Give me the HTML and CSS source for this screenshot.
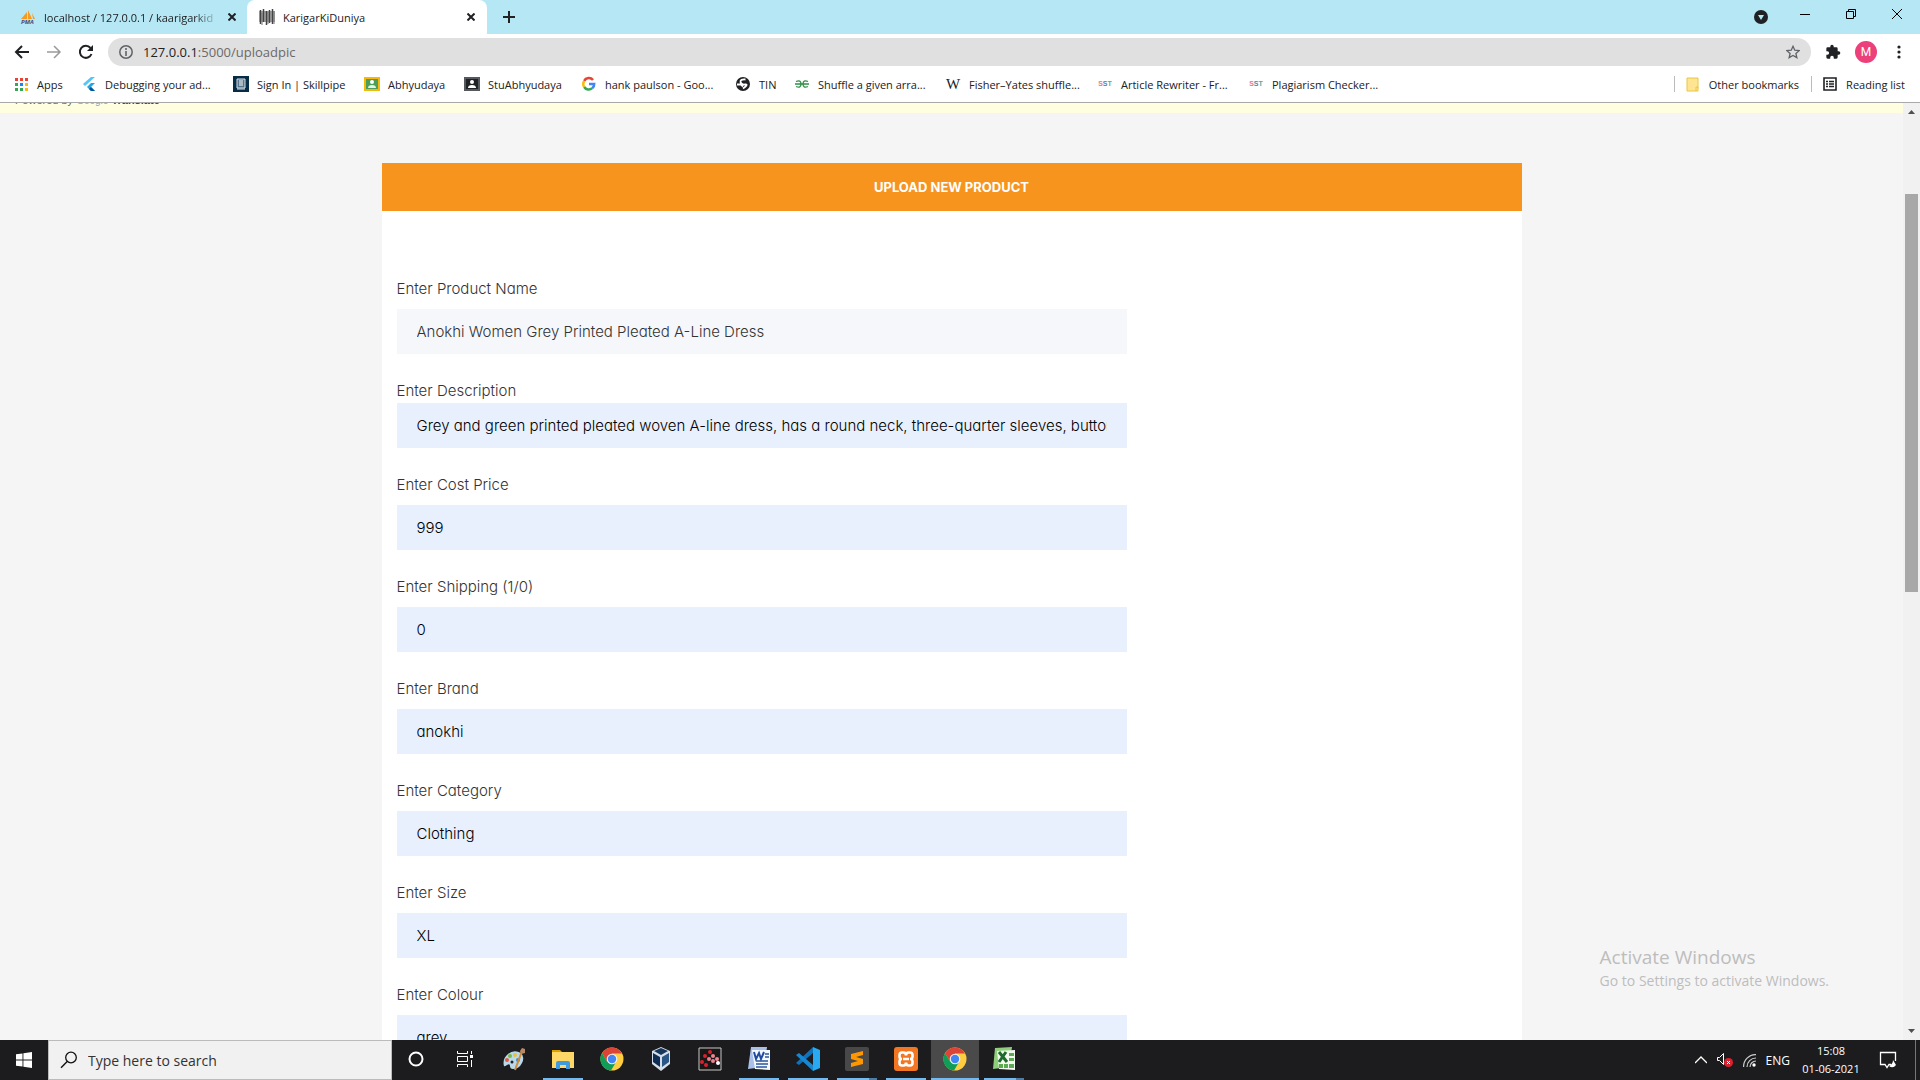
FILE: index.html
```html
<!DOCTYPE html>
<html lang="en">
<head>
<meta charset="utf-8">
<title>KarigarKiDuniya</title>
<link rel="stylesheet" href="styles.css">
</head>
<body>
<div class="screen">
  <header class="browser">
    <div class="tabstrip">
      <div class="tab">
        <svg class="ico" viewBox="0 0 16 16"><path d="M1 10 7 3v7zM8 10V1l4 9zM12 4l3 6h-2z" fill="#f89a1c"/><text x="1" y="15" font-size="6" font-weight="700" font-style="italic" fill="#4a4a78">PMA</text></svg>
        <span class="tab-title faded">localhost / 127.0.0.1 / kaarigarkid</span>
        <button class="plain" aria-label="Close tab"><svg class="cross" viewBox="0 0 8 8"><path d="M.5 .5l7 7M7.500 .5l-7 7" /></svg></button>
      </div>
      <div class="tab active">
        <svg class="ico" viewBox="0 0 16 16"><path d="M0 2h16v11H0z" fill="#aaa"/><path d="M1.500 1v14M4.500 0v13M7.500 2v14M10.500 1v13M13.500 0v15" stroke="#444" stroke-width="1.500"/><path d="M3 4v12M9 3v12M15 2v13" stroke="#777"/></svg>
        <span class="tab-title">KarigarKiDuniya</span>
        <button class="plain" aria-label="Close tab"><svg class="cross" viewBox="0 0 8 8"><path d="M.5 .5l7 7M7.500 .5l-7 7" /></svg></button>
      </div>
      <button class="plain newtab" aria-label="New tab"><svg width="12" height="12" viewBox="0 0 12 12"><path d="M6 0v12M0 6h12" stroke="#222" stroke-width="2"/></svg></button>
      <div class="window-buttons">
        <button class="plain tab-search" aria-label="Search tabs"><svg width="14" height="14" viewBox="0 0 14 14"><circle cx="7" cy="7" r="7" fill="#202124"/><path d="M4 5h6L7 10z" fill="#b5e8f4"/></svg></button>
        <button class="plain" aria-label="Minimize"><svg width="10" height="10" viewBox="0 0 10 10"><path d="M0 5.500h10" stroke="#000"/></svg></button>
        <button class="plain" aria-label="Restore"><svg width="10" height="10" viewBox="0 0 10 10"><path d="M.5 2.500h7v7h-7zM2.500 2.500v-2h7v7h-2" fill="none" stroke="#000"/></svg></button>
        <button class="plain" aria-label="Close"><svg width="10" height="10" viewBox="0 0 10 10"><path d="M0 0l10 10M10 0 0 10" stroke="#000"/></svg></button>
      </div>
    </div>
    <div class="toolbar">
      <div class="history">
        <button class="plain" aria-label="Back"><svg width="16" height="16" viewBox="0 0 16 16"><path d="M15 8H2M8 2 2 8l6 6" fill="none" stroke="#202124" stroke-width="2"/></svg></button>
        <button class="plain" aria-label="Forward"><svg width="16" height="16" viewBox="0 0 16 16"><path d="M1 8h13M8 2l6 6-6 6" fill="none" stroke="#9a9a9a" stroke-width="1.500"/></svg></button>
        <button class="plain" aria-label="Reload"><svg width="16" height="16" viewBox="0 0 16 16"><path d="M13.500 10A6 6 0 1 1 12.500 4" fill="none" stroke="#202124" stroke-width="2"/><path d="M15 1v6H9z" fill="#202124"/></svg></button>
      </div>
      <div class="address">
        <svg width="14" height="14" viewBox="0 0 14 14"><circle cx="7" cy="7" r="6.200" fill="none" stroke="#5f6368" stroke-width="1.500"/><path d="M7 6v5M7 3v2" stroke="#5f6368" stroke-width="1.600"/></svg>
        <span class="url">127.0.0.1<span class="path">:5000/uploadpic</span></span>
        <button class="plain" aria-label="Bookmark"><svg width="14" height="14" viewBox="0 0 16 16"><path d="M8 1.500l2 4.500 5 .5-3.700 3.200 1.100 4.800L8 12l-4.400 2.500 1.100-4.800L1 6.500 6 6z" fill="none" stroke="#5f6368" stroke-width="1.500"/></svg></button>
      </div>
      <button class="plain" aria-label="Extensions"><svg width="16" height="16" viewBox="0 0 24 24"><path d="M20.500 11H19V7a2 2 0 0 0-2-2h-4V3.500a2.500 2.500 0 0 0-5 0V5H4a2 2 0 0 0-2 2v3.800h1.500a2.700 2.700 0 0 1 0 5.400H2V20a2 2 0 0 0 2 2h3.800v-1.500a2.700 2.700 0 0 1 5.400 0V22H17a2 2 0 0 0 2-2v-4h1.500a2.500 2.500 0 0 0 0-5z" fill="#202124"/></svg></button>
      <button class="avatar">M</button>
      <button class="plain menu" aria-label="Menu"><svg width="4" height="14" viewBox="0 0 4 14"><g fill="#202124"><circle cx="2" cy="2" r="1.600"/><circle cx="2" cy="7" r="1.600"/><circle cx="2" cy="12" r="1.600"/></g></svg></button>
    </div>
    <nav class="bookmarks">
      <div class="marks">
        <a href="#"><svg class="ico" viewBox="0 0 16 16"><g fill="#ea4335"><path d="M2 2h3v3H2zM7 2h3v3H7zM12 2h3v3h-3z"/></g><path d="M2 7h3v3H2zM2 12h3v3H2z" fill="#34a853"/><path d="M7 7h3v3H7z" fill="#1a86f0"/><path d="M7 12h3v3H7z" fill="#34a853"/><path d="M12 7h3v3h-3zM12 12h3v3h-3z" fill="#fbbc05"/></svg>Apps</a>
        <a href="#"><svg class="ico" viewBox="0 0 16 16"><path d="M2 8 10 1h4L4 10z" fill="#54c5f8"/><path d="M6 11l4-4h4l-4 4 4 4h-4z" fill="#29a3e0"/><path d="M8 13l2-2 4 4h-4z" fill="#01579b"/></svg>Debugging your ad...</a>
        <a href="#"><svg class="ico" viewBox="0 0 16 16"><path d="M0 0h16v16H0z" fill="#072c46"/><path d="M4 3h8v9H4zM4 13h8" fill="#58748a" stroke="#d6e0e8"/><path d="M6 5h4M6 7h4M6 9h4" stroke="#fff"/></svg>Sign In | Skillpipe</a>
        <a href="#"><svg class="ico" viewBox="0 0 16 16"><path d="M0 1h16v14H0z" fill="#f6b90b"/><path d="M2 3h12v10H2z" fill="#4b9e5a"/><circle cx="8" cy="6" r="2" fill="#fff"/><path d="M4 12q0-3 4-3t4 3z" fill="#e5f2e7"/></svg>Abhyudaya</a>
        <a href="#"><svg class="ico" viewBox="0 0 16 16"><path d="M0 1h16v14H0z" fill="#55585c"/><path d="M2 3h12v10H2z" fill="#202124"/><circle cx="8" cy="6" r="2" fill="#fff"/><path d="M4 12q0-3 4-3t4 3z" fill="#fff"/></svg>StuAbhyudaya</a>
        <a href="#"><svg class="ico" viewBox="0 0 16 16"><g fill="none" stroke-width="2.500"><path d="M3.200 5A5.200 5.200 0 0 1 12 4" stroke="#ea4335"/><path d="M3.200 5a5.500 5.500 0 0 0 0 6" stroke="#fbbc05"/><path d="M3.200 11a5.200 5.200 0 0 0 8 1.200" stroke="#34a853"/><path d="M8 8h5.200a5 5 0 0 1-2 4.200" stroke="#4285f4"/></g></svg>hank paulson - Goo...</a>
        <a href="#"><svg class="ico" viewBox="0 0 16 16"><circle cx="8" cy="8" r="7" fill="#202124"/><path d="M10.500 3.500Q5 3 5.500 6T10 8.500 8 12.500M2 8.500h4l2 2" fill="none" stroke="#fff" stroke-width="1.800"/></svg>TIN</a>
        <a href="#"><svg class="ico" viewBox="0 0 16 16"><path d="M1 8h14M2 5.500q5-2 5 2.500t-5 2.500M14 5.500q-5-2-5 2.500t5 2.500" fill="none" stroke="#2f8d46" stroke-width="1.300"/></svg>Shuffle a given arra...</a>
        <a href="#"><span class="ico wiki">W</span>Fisher–Yates shuffle...</a>
        <a href="#"><span class="ico sst"><i>S</i><b>S</b><em>T</em></span>Article Rewriter - Fr...</a>
        <a href="#"><span class="ico sst"><i>S</i><b>S</b><em>T</em></span>Plagiarism Checker...</a>
      </div>
      <div class="side-marks">
        <a href="#"><svg class="ico" viewBox="0 0 16 16"><path d="M2 2h11v10l-2 3H2z" fill="#ffe591" stroke="#e9c645"/><path d="M11 15v-4h2v4z" fill="#ffe591" stroke="#e9c645"/></svg>Other bookmarks</a>
        <a href="#"><svg class="ico" viewBox="0 0 16 16"><path d="M2 2h12v12H2z" fill="none" stroke="#202124" stroke-width="1.600"/><path d="M4 5.500h2M7 5.500h5M4 8h2M7 8h5M4 10.500h2M7 10.500h5" stroke="#202124" stroke-width="1.300"/></svg>Reading list</a>
      </div>
    </nav>
  </header>

  <main class="viewport">
    <div class="page">
      <div class="translate"><div>Powered by <span class="g">Google</span> <b>Translate</b></div></div>
      <form class="card">
        <h1>UPLOAD NEW PRODUCT</h1>
        <div class="fields">
          <div class="field"><label for="name">Enter Product Name</label><input id="name" class="typed" value="Anokhi Women Grey Printed Pleated A-Line Dress"></div>
          <div class="field tight"><label for="desc">Enter Description</label><input id="desc" value="Grey and green printed pleated woven A-line dress, has a round neck, three-quarter sleeves, button closure"></div>
          <div class="field"><label for="cost">Enter Cost Price</label><input id="cost" value="999"></div>
          <div class="field"><label for="ship">Enter Shipping (1/0)</label><input id="ship" value="0"></div>
          <div class="field"><label for="brand">Enter Brand</label><input id="brand" value="anokhi"></div>
          <div class="field"><label for="cat">Enter Category</label><input id="cat" value="Clothing"></div>
          <div class="field"><label for="size">Enter Size</label><input id="size" value="XL"></div>
          <div class="field"><label for="colour">Enter Colour</label><input id="colour" value="grey"></div>
        </div>
      </form>
    </div>
    <div class="scrollbar">
      <svg width="7" height="4" viewBox="0 0 7 4"><path d="M0 4 3.500 0 7 4z" fill="#505050"/></svg>
      <div class="track"><div class="thumb"></div></div>
      <svg width="7" height="4" viewBox="0 0 7 4"><path d="M0 0h7L3.500 4z" fill="#505050"/></svg>
    </div>
    <div class="watermark"><p class="big">Activate Windows</p><p>Go to Settings to activate Windows.</p></div>
  </main>

  <footer class="taskbar">
    <button class="plain start" aria-label="Start"><svg width="16" height="16" viewBox="0 0 16 16"><path d="M0 2.300 6.500 1.400V7.600H0zM7.400 1.200 16 0v7.600H7.400zM0 8.400h6.500v6.200L0 13.700zM7.400 8.400H16V16l-8.600-1.200z" fill="#fff"/></svg></button>
    <div class="search">
      <svg width="18" height="18" viewBox="0 0 18 18"><circle cx="11" cy="6.500" r="5.300" fill="none" stroke="#111" stroke-width="1.300"/><path d="M7.200 10.400 1 16.800" stroke="#111" stroke-width="1.400"/></svg>
      <input type="text" aria-label="Search" placeholder="Type here to search">
    </div>
    <div class="apps">
      <button class="plain" aria-label="Cortana"><svg width="16" height="16" viewBox="0 0 16 16"><circle cx="8" cy="8" r="6.500" fill="none" stroke="#fff" stroke-width="2"/></svg></button>
      <button class="plain" aria-label="Task view"><svg width="16" height="16" viewBox="0 0 16 16"><path d="M.5 0v2.500h10V0M.5 5.500h10v5H.5zM.5 16v-2.500h10V16M14.500 0v3M14.500 9v7" fill="none" stroke="#fff"/><path d="M13 4h3v3h-3z" fill="#fff"/></svg></button>
      <button class="plain" aria-label="Paint"><svg width="24" height="24" viewBox="0 0 24 24"><path d="M2 19Q0 12 6 7t13-1q4 4 1 10t-9 6q-3 0-3-3t-3-1-3 1z" fill="#b9d9ea"/><circle cx="5" cy="13" r="2" fill="#e05a44"/><circle cx="8" cy="9" r="2" fill="#74b84a"/><circle cx="13" cy="8" r="2" fill="#e8c13b"/><circle cx="16" cy="13" r="2" fill="#4488c8"/><circle cx="10" cy="15" r="1.500" fill="#222"/><path d="M13 23 20 4" stroke="#cf8a3c" stroke-width="2"/><path d="M18 4l2-3 3 1v4l-4 1z" fill="#b98a66"/></svg></button>
      <button class="plain open" aria-label="File Explorer"><svg width="24" height="24" viewBox="0 0 24 24"><path d="M1 3h8l2 2H1z" fill="#d9a000"/><path d="M1 5h22v16H1z" fill="#ffd766"/><path d="M5 22v-6q0-2 2-2h10q2 0 2 2v6h-4v-4H9v4z" fill="#3f9be0"/></svg></button>
      <button class="plain" aria-label="Chrome"><svg width="24" height="24" viewBox="0 0 24 24"><use href="#chrome"/></svg></button>
      <button class="plain" aria-label="VirtualBox"><svg width="24" height="24" viewBox="0 0 24 24"><path d="M12 0l9 4v13l-9 7-9-7V4z" fill="#d6dfe9"/><path d="M12 1l7 3-7 4-7-4z" fill="#17365c"/><path d="M4 6l7 4v10l-7-5z" fill="#0f2d54"/><path d="M20 6l-7 4v10l7-5z" fill="#2a5587"/></svg></button>
      <button class="plain" aria-label="Scatter"><svg width="24" height="24" viewBox="0 0 24 24"><path d="M1 1h22v22H1z" fill="#171717" stroke="#c8c8c8"/><g fill="#d8202c"><circle cx="12" cy="5" r="2"/><circle cx="7" cy="9" r="2"/><circle cx="4" cy="15" r="2"/><circle cx="8" cy="18" r="2"/></g><g fill="#ef8290"><circle cx="15" cy="9" r="2"/><circle cx="11" cy="12" r="2"/><circle cx="15" cy="14" r="2"/><circle cx="19" cy="12" r="2"/></g><circle cx="20" cy="16" r="2" fill="#fff"/></svg></button>
      <button class="plain open" aria-label="Word"><svg width="24" height="24" viewBox="0 0 24 24"><path d="M4 0h16l-3 20-16 2z" fill="#a9c1e8"/><path d="M5 3h18v20l-15-1z" fill="#f5f8fd"/><path d="M7 5l2 7 3-6 2 6 3-7" fill="none" stroke="#1f4ba0" stroke-width="2"/><path d="M18 7h4M18 10h4M9 14h12M9 17h12M9 20h11" stroke="#2b579a" stroke-width="1.500"/></svg></button>
      <button class="plain open" aria-label="VS Code"><svg width="24" height="24" viewBox="0 0 24 24"><path d="M17 0l7 3v18l-7 3z" fill="#29a9f2"/><path d="M17 0v6L3 18l-3-2z" fill="#0e72bd"/><path d="M17 24v-6L3 6 0 8z" fill="#1887d2"/></svg></button>
      <button class="plain open split" aria-label="Sublime Text"><svg width="24" height="24" viewBox="0 0 24 24"><rect width="24" height="24" rx="2" fill="#484848"/><path d="M18 4v4l-7 2 7 2v5L6 20v-4l7-2-7-2V7z" fill="#ff9800"/></svg></button>
      <button class="plain open" aria-label="XAMPP"><svg width="24" height="24" viewBox="0 0 24 24"><rect width="24" height="24" rx="3" fill="#f37622"/><path d="M8 5.500h1.500q2.500 0 2.500 3 0-3 2.500-3H16q2.500 0 2.500 2.500v1.500q0 2.500-2.500 2.500 2.500 0 2.500 2.500V16q0 2.500-2.500 2.500h-1.500q-2.500 0-2.500-3 0 3-2.500 3H8Q5.500 18.500 5.500 16v-1.500Q5.500 12 8 12q-2.500 0-2.500-2.500V8q0-2.500 2.500-2.500zM9 12h6" fill="none" stroke="#fff" stroke-width="2.600"/></svg></button>
      <button class="plain open current" aria-label="Chrome window"><svg width="24" height="24" viewBox="0 0 24 24"><g id="chrome"><circle cx="12" cy="12" r="11.500" fill="#ffcd40"/><path d="M12 12 7 14.500 2 6A11.500 11.500 0 0 1 22 6.500H12z" fill="#db4437"/><path d="M2 6A11.500 11.500 0 0 0 11 23.500L16 15l-4-3-5 2.500z" fill="#0f9d58"/><circle cx="12" cy="12" r="5.300" fill="#f1f1f1"/><circle cx="12" cy="12" r="4.200" fill="#4285f4"/></g></svg></button>
      <button class="plain open split" aria-label="Excel"><svg width="24" height="24" viewBox="0 0 24 24"><path d="M3 1 20 0l-3 20-16 2z" fill="#8fcf7b"/><path d="M5 4l18-1v20l-16-1z" fill="#f4faf1"/><path d="M7 5l8 10M14 5 7 15" stroke="#1e6b2c" stroke-width="3"/><path d="M17 6h5v3h-5zM17 11h5v3h-5zM7 17h4v4H7zM12 17h4v4h-4zM17 17h5v4h-5z" fill="#5dab50"/></svg></button>
    </div>
    <div class="tray">
      <svg width="12" height="8" viewBox="0 0 12 8"><path d="M0 7l6-6 6 6" fill="none" stroke="#fff" stroke-width="1.300"/></svg>
      <svg width="16" height="14" viewBox="0 0 16 14"><path d="M.5 4.500h2l4-4v11l-4-4h-2z" fill="none" stroke="#fff"/><circle cx="11.500" cy="9.500" r="4.500" fill="#e0202e"/><path d="M10 8l3 3M13 8l-3 3" stroke="#fff"/></svg>
      <svg width="13" height="13" viewBox="0 0 13 13"><g fill="none" stroke="#ccc" stroke-width="1.200"><path d="M.6 13A12 12 0 0 1 13 .6M4 13a9 9 0 0 1 9-9M7 13a6 6 0 0 1 6-6"/></g><circle cx="11" cy="11" r="1.700" fill="#fff"/></svg>
      <span class="lang">ENG</span>
      <div class="clock"><span>15:08</span><span>01-06-2021</span></div>
      <button class="plain" aria-label="Notifications"><svg width="18" height="18" viewBox="0 0 18 18"><path d="M12 13.500h-2l-2 3-2-3H1.500v-12h15V10" fill="none" stroke="#fff" stroke-width="1.300"/><path d="M14 9q0 4-4 6 4 3 7-1z" fill="#fff"/></svg></button>
    </div>
  </footer>
</div>
</body>
</html>
```
FILE: styles.css
```css
* { box-sizing: border-box; }
body { margin: 0; font-family: "Open Sans", "Noto Sans", sans-serif; font-size: 12px; color: #202124; }
svg { display: block; flex: none; }
a { color: inherit; text-decoration: none; }
.plain { display: flex; align-items: center; justify-content: center; padding: 0; border: 0; background: none; }
.ico { width: 16px; height: 16px; flex: none; }

.screen { height: 100vh; display: flex; flex-direction: column; overflow: hidden; }

.browser { flex: none; background: #fff; border-bottom: 1px solid #a9a9a9; }
.tabstrip { display: flex; height: 34px; background: #b5e8f4; }
.tab { display: flex; align-items: center; gap: 8px; width: 240px; padding: 0 12px; }
.tab:first-child { width: 247px; padding: 0 11px 0 20px; }
.tab.active { background: #fff; border-radius: 8px 8px 0 0; }
.tab-title { flex: 1; overflow: hidden; white-space: nowrap; font-size: 11px; }
.faded { mask-image: linear-gradient(90deg, #000 85%, transparent); }
.cross { width: 8px; height: 8px; fill: none; stroke: #202124; stroke-width: 2; }
.newtab { width: 44px; }
.window-buttons { display: flex; margin-left: auto; height: 28px; }
.window-buttons .plain { width: 46px; }
.window-buttons .tab-search { width: 42px; height: 34px; }

.toolbar { display: flex; align-items: center; gap: 14px; height: 36px; padding: 0 19px 0 14px; }
.history { display: flex; gap: 16px; }
.address { flex: 1; display: flex; align-items: center; gap: 10px; height: 28px; padding: 0 11px; border-radius: 14px; background: #e0e0e0; }
.url { flex: 1; font-size: 13px; }
.path { color: #6a6a6a; }
.avatar { width: 22px; height: 22px; padding: 0; border: 0; border-radius: 50%; background: #ec407a; color: #fff; font: 12px Roboto, sans-serif; }
.menu { margin-left: 6px; }

.bookmarks { display: flex; justify-content: space-between; align-items: center; height: 32px; padding: 0 15px 4px 13px; font-size: 11px; white-space: nowrap; }
.marks { display: grid; grid-template-columns: 68px 152px 131px 100px 117px 154px 59px 151px 152px 151px auto; }
.bookmarks a { display: flex; align-items: center; gap: 8px; }
.side-marks { display: flex; gap: 12px; }
.side-marks a { padding-left: 10px; border-left: 1px solid #bbb; }
.wiki { font: 15px/16px "Liberation Serif", serif; text-align: center; }
.sst { display: flex; justify-content: center; font: 700 7px/16px "Liberation Sans", sans-serif; }
.sst i { color: #e77; font-style: normal; }
.sst b { color: #48b; }
.sst em { color: #5a9; font-style: normal; }

.viewport { position: relative; flex: 1; min-height: 0; display: flex; background: #f5f5f5; overflow: hidden; }
.page { flex: 1; overflow: hidden; font-family: Inter, "Open Sans", sans-serif; font-feature-settings: "cv11"; }
.translate { display: flex; align-items: flex-end; height: 10px; padding: 0 15px 5px; overflow: hidden; background: #ffffdf; color: #666; font: 11px/14px "Liberation Sans", sans-serif; }
.translate b { color: #444; }
.translate .g { color: #7ba4f5; font-size: 10px; }
.card { width: 1140px; max-width: 100%; margin: 50px auto 0; background: #fff; }
.card h1 { margin: 0; background: #f7941d; color: #fff; font-size: 13px; font-weight: 700; line-height: 48px; text-align: center; }
.fields { display: flex; flex-direction: column; gap: 25px; padding: 66px 15px 25px; }
.field { display: flex; flex-direction: column; gap: 8px; max-width: 730px; color: #333; font-size: 15px; font-weight: 300; line-height: 24px; }
.field.tight { gap: 0; }
.field input { width: 100%; height: 45px; padding: 0 20px; border: 0; background: #e8f0fe; color: #000; font: inherit; font-feature-settings: inherit; }
.field .typed { background: #f6f7fb; color: #333; }

.scrollbar { display: flex; flex-direction: column; align-items: center; width: 17px; padding: 7px 0; background: #f1f1f1; }
.track { flex: 1; width: 13px; padding: 80px 0; }
.thumb { height: 52%; min-height: 398px; background: #a8a8a8; }
.watermark { position: absolute; right: 91px; bottom: 48px; color: #bdbdbd; font-size: 14px; line-height: 22px; }
.watermark p { margin: 0; }
.watermark .big { font-size: 19px; line-height: 26px; }

.taskbar { flex: none; display: flex; height: 40px; background: #1c1c1e; color: #fff; }
.start { width: 48px; }
.search { display: flex; align-items: center; gap: 10px; width: 344px; padding: 0 11px; border: 1px solid #bbb; background: #f1f1f1; }
.search input { flex: 1; min-width: 0; padding: 0; border: 0; background: none; font: 14px "Open Sans", sans-serif; }
.search input::placeholder { color: #333; opacity: 1; }
.apps { display: flex; gap: 1px; }
.apps .plain { width: 48px; border-bottom: 2px solid transparent; }
.apps .plain.open { background: linear-gradient(#76b9ed, #76b9ed) center bottom / 40px 2px no-repeat border-box; }
.apps .plain.split { background: linear-gradient(90deg, #76b9ed 80%, #4f7da3 80%) center bottom / 40px 2px no-repeat border-box; }
.apps .plain.current { background: #4a4a4a; border-bottom-color: #76b9ed; }
.tray { display: flex; align-items: center; gap: 10px; margin-left: auto; margin-right: 4px; padding-right: 18px; border-right: 1px solid #777; }
.lang { font-size: 12px; }
.clock { display: flex; flex-direction: column; align-items: center; width: 62px; margin-right: 7px; font-size: 11px; line-height: 18px; }
```
